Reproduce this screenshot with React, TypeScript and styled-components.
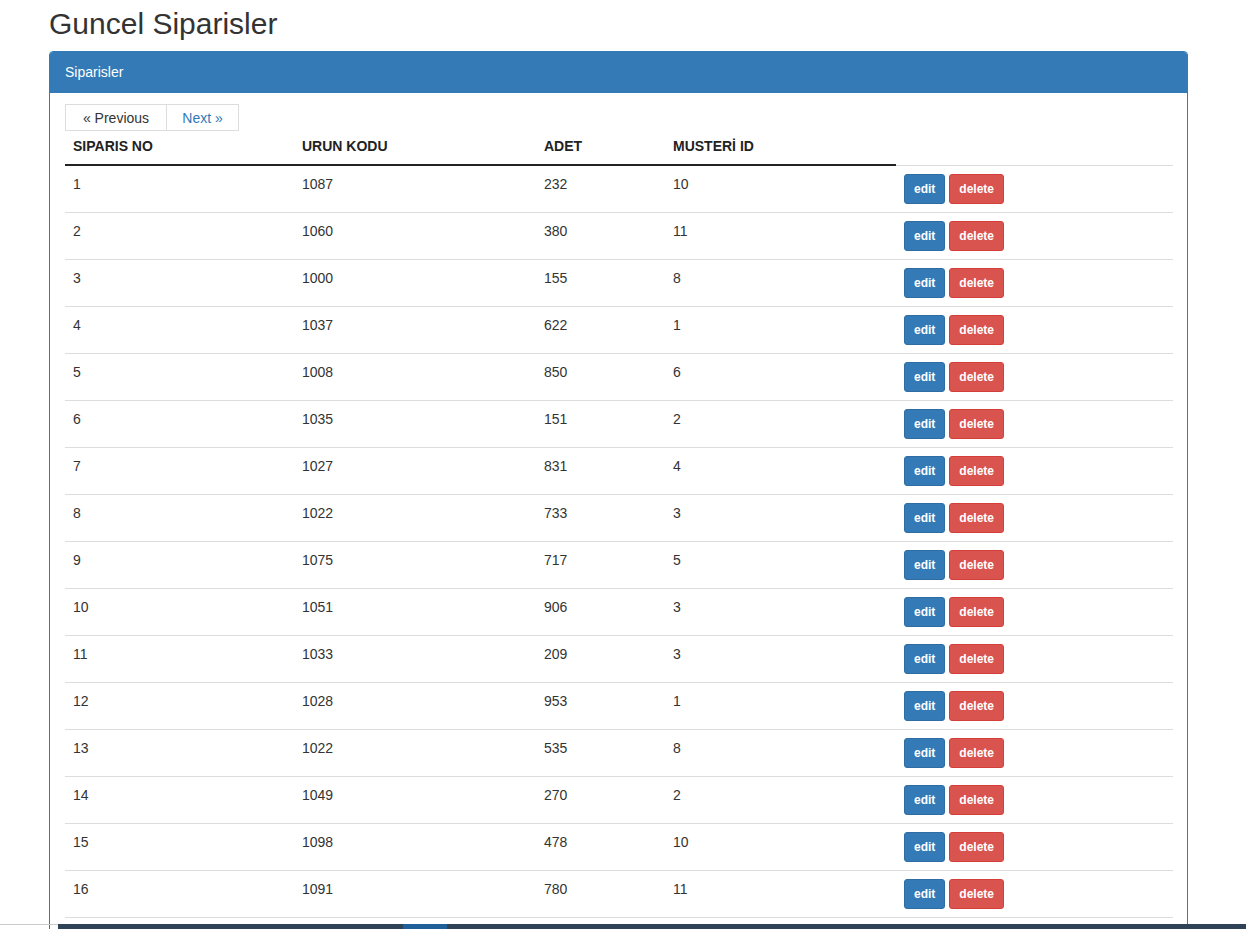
import React from "react";
import styled, { createGlobalStyle } from "styled-components";

const GlobalStyle = createGlobalStyle`
  html, body {
    margin: 0;
    padding: 0;
    background: #fff;
    font-family: "Liberation Sans", Arial, sans-serif;
    font-size: 14px;
    line-height: 20px;
    color: #333;
  }
`;

const Page = styled.div`
  padding: 0 58px 0 49px;
`;

const Title = styled.h2`
  margin: 7px 0 11px;
  font-size: 30px;
  font-weight: 400;
  line-height: 33px;
  color: #333;
`;

const Panel = styled.div`
  border: 1px solid #337ab7;
  border-radius: 4px;
  background: #fff;
`;

const PanelHeading = styled.div`
  background: #337ab7;
  color: #fff;
  padding: 10px 15px;
  border-top-left-radius: 3px;
  border-top-right-radius: 3px;
  font-size: 14px;
  line-height: 21px;
`;

const PanelBody = styled.div`
  padding: 11px 14px 15px 15px;
`;

const Pager = styled.div`
  display: flex;
`;

const PageLink = styled.a<{ $active?: boolean; $w: number }>`
  display: block;
  box-sizing: border-box;
  width: ${(p) => p.$w}px;
  text-align: center;
  padding: 3px 0 2px;
  line-height: 20px;
  border: 1px solid #ddd;
  color: ${(p) => (p.$active ? "#337ab7" : "#333")};
  text-decoration: none;
  cursor: pointer;
  & + & {
    margin-left: -1px;
  }
`;

const Table = styled.table`
  width: 100%;
  table-layout: fixed;
  border-collapse: collapse;
  border-spacing: 0;
`;

const Th = styled.th<{ $w: number }>`
  width: ${(p) => p.$w}px;
  text-align: left;
  padding: 5px 8px 8px 8px;
  font-size: 14px;
  font-weight: 700;
  line-height: 20px;
  color: #222;
  border-bottom: 2px solid #222;
  vertical-align: bottom;
`;

const Td = styled.td`
  padding: 8px;
  border-top: 1px solid #ddd;
  vertical-align: top;
  line-height: 20px;
  color: #333;
  tr:last-child > & {
    border-bottom: 1px solid #ddd;
  }
`;

const Btn = styled.button<{ $kind: "edit" | "delete" }>`
  display: inline-block;
  padding: 5px 9px;
  margin-right: 4px;
  font-family: "Liberation Sans", Arial, sans-serif;
  font-size: 12px;
  font-weight: 700;
  line-height: 18px;
  color: #fff;
  border-radius: 3px;
  cursor: pointer;
  background: ${(p) => (p.$kind === "edit" ? "#337ab7" : "#d9534f")};
  border: 1px solid ${(p) => (p.$kind === "edit" ? "#2e6da4" : "#d43f3a")};
`;

const BottomBar = styled.div`
  position: fixed;
  left: 0;
  right: 0;
  bottom: 0;
  height: 5px;
  display: flex;
`;

const BarGap = styled.div`
  width: 58px;
  border-top: 1px solid #ccc;
`;

const BarTrack = styled.div`
  flex: 1;
  background: #2f4358;
  display: flex;
`;

const BarThumb = styled.div`
  margin-left: 345px;
  width: 44px;
  background: #1f5f9a;
`;

const rows: [number, number, number, number][] = [
  [1, 1087, 232, 10],
  [2, 1060, 380, 11],
  [3, 1000, 155, 8],
  [4, 1037, 622, 1],
  [5, 1008, 850, 6],
  [6, 1035, 151, 2],
  [7, 1027, 831, 4],
  [8, 1022, 733, 3],
  [9, 1075, 717, 5],
  [10, 1051, 906, 3],
  [11, 1033, 209, 3],
  [12, 1028, 953, 1],
  [13, 1022, 535, 8],
  [14, 1049, 270, 2],
  [15, 1098, 478, 10],
  [16, 1091, 780, 11],
];

export default function App() {
  return (
    <>
      <GlobalStyle />
      <Page>
        <Title>Guncel Siparisler</Title>
        <Panel>
          <PanelHeading>Siparisler</PanelHeading>
          <PanelBody>
            <Pager>
              <PageLink $w={102}>« Previous</PageLink>
              <PageLink $w={73} $active>
                Next »
              </PageLink>
            </Pager>
            <Table>
              <thead>
                <tr>
                  <Th $w={213}>SIPARIS NO</Th>
                  <Th $w={226}>URUN KODU</Th>
                  <Th $w={113}>ADET</Th>
                  <Th $w={215}>MUSTERİ ID</Th>
                </tr>
              </thead>
              <tbody>
                {rows.map(([no, kod, adet, musteri]) => (
                  <tr key={no}>
                    <Td>{no}</Td>
                    <Td>{kod}</Td>
                    <Td>{adet}</Td>
                    <Td>{musteri}</Td>
                    <Td>
                      <Btn $kind="edit">edit</Btn>
                      <Btn $kind="delete">delete</Btn>
                    </Td>
                  </tr>
                ))}
              </tbody>
            </Table>
          </PanelBody>
        </Panel>
      </Page>
      <BottomBar>
        <BarGap />
        <BarTrack>
          <BarThumb />
        </BarTrack>
      </BottomBar>
    </>
  );
}
